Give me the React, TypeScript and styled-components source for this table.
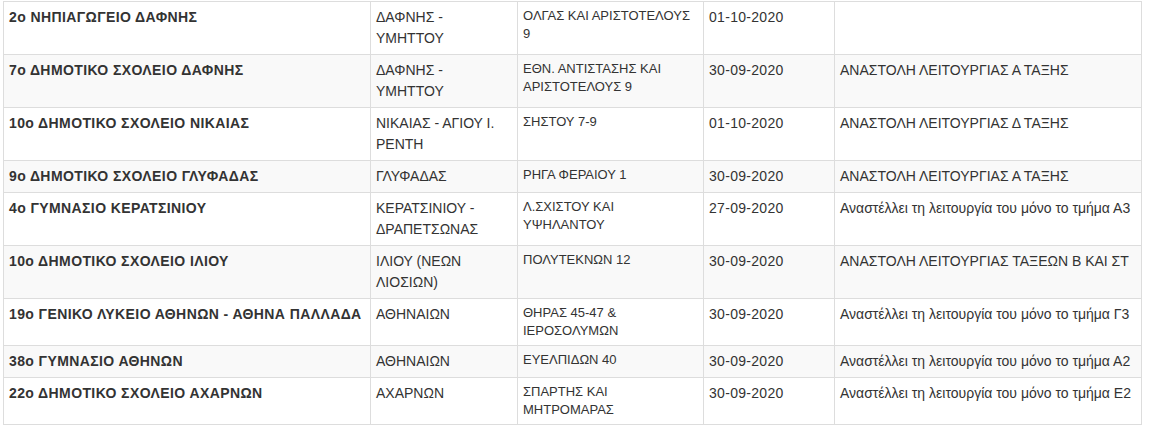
import React from "react";
import styled, { createGlobalStyle } from "styled-components";

const Global = createGlobalStyle`
  html, body { margin: 0; padding: 0; background: #fff; }
  body { font-family: "Liberation Sans", Arial, Helvetica, sans-serif; color: #333; }
`;

const Wrap = styled.div`
  padding: 1px 0 0 3px;
`;

const Table = styled.table`
  width: 1139px;
  table-layout: fixed;
  border-collapse: collapse;
  font-size: 14px;
  line-height: 21px;
  color: #333;
`;

const Row = styled.tr`
  &:nth-child(even) { background: #f9f9f9; }
`;

type Kind = "name" | "plain" | "addr" | "date";

const Cell = styled.td<{ $kind?: Kind }>`
  border: 1px solid #ddd;
  padding: 5px;
  vertical-align: top;
  font-weight: ${(p) => (p.$kind === "name" ? 700 : 400)};
  font-size: ${(p) => (p.$kind === "addr" ? "13px" : "14px")};
  line-height: ${(p) => (p.$kind === "addr" ? "18px" : "21px")};
  letter-spacing: ${(p) =>
    p.$kind === "name" ? "0.4px" : p.$kind === "date" ? "0.3px" : "0"};
`;

const rows: [string, string, string, string, string][] = [
  ["2ο ΝΗΠΙΑΓΩΓΕΙΟ ΔΑΦΝΗΣ", "ΔΑΦΝΗΣ - ΥΜΗΤΤΟΥ", "ΟΛΓΑΣ ΚΑΙ ΑΡΙΣΤΟΤΕΛΟΥΣ 9", "01-10-2020", ""],
  ["7ο ΔΗΜΟΤΙΚΟ ΣΧΟΛΕΙΟ ΔΑΦΝΗΣ", "ΔΑΦΝΗΣ - ΥΜΗΤΤΟΥ", "ΕΘΝ. ΑΝΤΙΣΤΑΣΗΣ ΚΑΙ ΑΡΙΣΤΟΤΕΛΟΥΣ 9", "30-09-2020", "ΑΝΑΣΤΟΛΗ ΛΕΙΤΟΥΡΓΙΑΣ Α ΤΑΞΗΣ"],
  ["10ο ΔΗΜΟΤΙΚΟ ΣΧΟΛΕΙΟ ΝΙΚΑΙΑΣ", "ΝΙΚΑΙΑΣ - ΑΓΙΟΥ Ι. ΡΕΝΤΗ", "ΣΗΣΤΟΥ 7-9", "01-10-2020", "ΑΝΑΣΤΟΛΗ ΛΕΙΤΟΥΡΓΙΑΣ Δ ΤΑΞΗΣ"],
  ["9ο ΔΗΜΟΤΙΚΟ ΣΧΟΛΕΙΟ ΓΛΥΦΑΔΑΣ", "ΓΛΥΦΑΔΑΣ", "ΡΗΓΑ ΦΕΡΑΙΟΥ 1", "30-09-2020", "ΑΝΑΣΤΟΛΗ ΛΕΙΤΟΥΡΓΙΑΣ Α ΤΑΞΗΣ"],
  ["4ο ΓΥΜΝΑΣΙΟ ΚΕΡΑΤΣΙΝΙΟΥ", "ΚΕΡΑΤΣΙΝΙΟΥ - ΔΡΑΠΕΤΣΩΝΑΣ", "Λ.ΣΧΙΣΤΟΥ ΚΑΙ ΥΨΗΛΑΝΤΟΥ", "27-09-2020", "Αναστέλλει τη λειτουργία του μόνο το τμήμα Α3"],
  ["10ο ΔΗΜΟΤΙΚΟ ΣΧΟΛΕΙΟ ΙΛΙΟΥ", "ΙΛΙΟΥ (ΝΕΩΝ ΛΙΟΣΙΩΝ)", "ΠΟΛΥΤΕΚΝΩΝ 12", "30-09-2020", "ΑΝΑΣΤΟΛΗ ΛΕΙΤΟΥΡΓΙΑΣ ΤΑΞΕΩΝ Β ΚΑΙ ΣΤ"],
  ["19ο ΓΕΝΙΚΟ ΛΥΚΕΙΟ ΑΘΗΝΩΝ - ΑΘΗΝΑ ΠΑΛΛΑΔΑ", "ΑΘΗΝΑΙΩΝ", "ΘΗΡΑΣ 45-47 & ΙΕΡΟΣΟΛΥΜΩΝ", "30-09-2020", "Αναστέλλει τη λειτουργία του μόνο το τμήμα Γ3"],
  ["38ο ΓΥΜΝΑΣΙΟ ΑΘΗΝΩΝ", "ΑΘΗΝΑΙΩΝ", "ΕΥΕΛΠΙΔΩΝ 40", "30-09-2020", "Αναστέλλει τη λειτουργία του μόνο το τμήμα Α2"],
  ["22ο ΔΗΜΟΤΙΚΟ ΣΧΟΛΕΙΟ ΑΧΑΡΝΩΝ", "ΑΧΑΡΝΩΝ", "ΣΠΑΡΤΗΣ ΚΑΙ ΜΗΤΡΟΜΑΡΑΣ", "30-09-2020", "Αναστέλλει τη λειτουργία του μόνο το τμήμα Ε2"],
];

export default function App() {
  return (
    <>
      <Global />
      <Wrap>
        <Table>
          <colgroup>
            <col style={{ width: 367 }} />
            <col style={{ width: 147 }} />
            <col style={{ width: 186 }} />
            <col style={{ width: 131 }} />
            <col />
          </colgroup>
          <tbody>
            {rows.map((r, i) => (
              <Row key={i}>
                <Cell $kind="name">{r[0]}</Cell>
                <Cell>{r[1]}</Cell>
                <Cell $kind="addr">{r[2]}</Cell>
                <Cell $kind="date">{r[3]}</Cell>
                <Cell>{r[4]}</Cell>
              </Row>
            ))}
          </tbody>
        </Table>
      </Wrap>
    </>
  );
}
